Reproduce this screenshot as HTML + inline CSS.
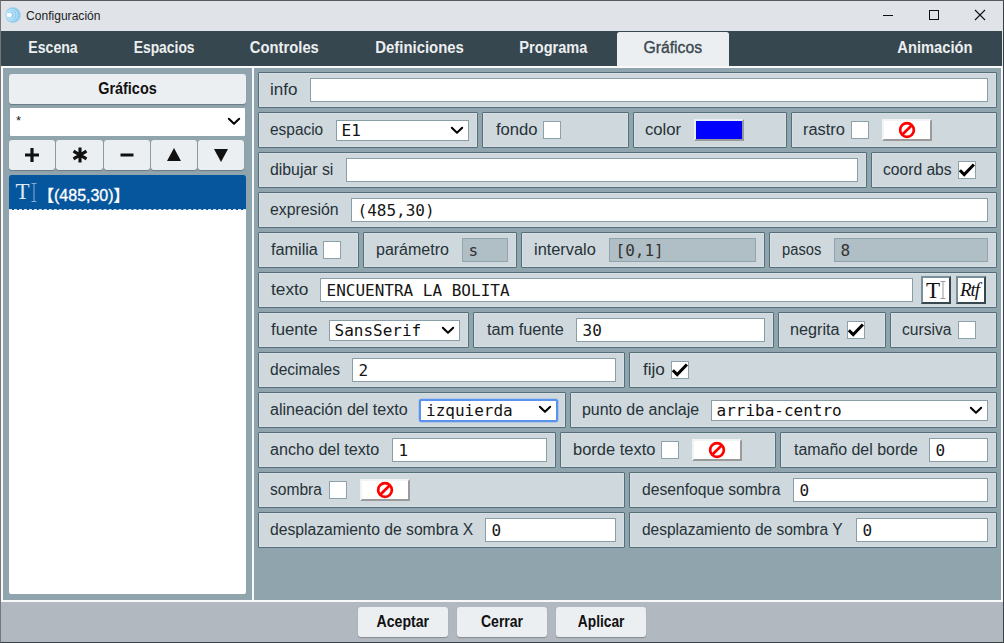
<!DOCTYPE html>
<html lang="es"><head><meta charset="utf-8"><title>Configuración</title>
<style>
html,body{margin:0;padding:0;}
body{width:1004px;height:643px;overflow:hidden;position:relative;background:#e0e3e8;font-family:"Liberation Sans",sans-serif;}
div,span{box-sizing:border-box;}
.abs,.cell,.lb,.in,.sel,.cb,.ban,.tab,.btn{position:absolute;}
#win{position:absolute;left:0;top:0;width:1004px;height:643px;border:1px solid #3b4246;border-left-color:#777;border-top-color:#5a5a5a;}
#title{position:absolute;left:1px;top:1px;width:1002px;height:30px;background:#e0e3e8;}
#title .t{transform-origin:0 50%;position:absolute;left:25px;top:7px;font-size:12px;line-height:16px;color:#1c1c1c;white-space:nowrap;}
#tabs{position:absolute;left:1px;top:31px;width:1001px;height:35px;background:#37474f;}
.tab span,.btn span{display:inline-block;}
.tab{top:0;height:35px;line-height:34px;font-size:16px;font-weight:bold;color:#eceff1;text-align:center;white-space:nowrap;}
.tab.act{top:1px;height:34px;line-height:32px;background:#eceff1;color:#37474f;border-radius:2.5px 2.5px 0 0;font-weight:normal;-webkit-text-stroke:0.35px #37474f;}
#content{position:absolute;left:1px;top:66px;width:1002px;height:536px;background:#f8f9fb;}
#left{position:absolute;left:2px;top:2px;width:249px;height:532px;background:#90a4ae;}
#right{position:absolute;left:253px;top:2px;width:747px;height:532px;background:#90a4ae;}
#bottom{position:absolute;left:1px;top:602px;width:1002px;height:40px;background:#b1b8bf;}
.btn{background:#eceff1;border-radius:3px;box-shadow:0 1px 1px rgba(0,0,0,.25);font-size:16px;color:#111;text-align:center;white-space:nowrap;font-weight:bold;}
.cell{height:36px;background:#cfd8dc;border:1px solid #546e7a;border-radius:1px;box-shadow:inset 0 0 0 1px #d8dfe3;}
.lb{transform-origin:0 50%;font-size:16px;line-height:20px;color:#263238;white-space:nowrap;}
.in{height:24px;background:#fff;border:1px solid #8a9ea8;font-family:"DejaVu Sans Mono","Liberation Mono",monospace;font-size:16px;line-height:24px;color:#161616;padding-left:5.5px;white-space:pre;overflow:hidden;}
.in.dis{background:#b0bec5;border-color:#90a4ae;color:#333;}
.sel{height:21px;background:#fff;border:1px solid #8a9ea8;font-family:"DejaVu Sans Mono","Liberation Mono",monospace;font-size:16px;line-height:19px;color:#111;padding-left:4.5px;white-space:pre;overflow:hidden;}
.sel.foc{border:2px solid #5a92ec;line-height:17px;padding-left:5px;border-radius:2.5px;margin-top:-1px;height:23px;line-height:19px;box-shadow:0 0 0 0.5px #8fb4ee;}
.sel svg,.chev{position:absolute;}
.cb{width:18px;height:18px;background:#fff;border:1px solid #8da1ab;}
.cb svg{position:absolute;left:0;top:0;}
.ban{width:50px;height:22px;background:#fff;border:2px solid;border-color:#f1f4f5 #9a9a9a #9a9a9a #f1f4f5;}
.ban svg{position:absolute;left:14px;top:0px;}
</style></head><body>
<div id="win"></div>

<div id="title">
<svg class="abs" style="left:4.2px;top:5.5px" width="16" height="16" viewBox="0 0 16 16"><circle cx="8" cy="8" r="7.7" fill="#8fcdf0"/><circle cx="6.6" cy="8" r="5.6" fill="none" stroke="#c4e4f7" stroke-width="0.9"/><circle cx="5.6" cy="8" r="4" fill="none" stroke="#d4ecfa" stroke-width="0.9"/><circle cx="4.8" cy="8" r="2.6" fill="#cfe9f9"/><ellipse cx="4.2" cy="8" rx="2.3" ry="1.9" fill="#fff"/></svg>
<span class="t" style="transform:scaleX(1.0061);" id="ttl">Configuración</span>
<svg class="abs" style="left:881px;top:8px" width="12" height="12" viewBox="0 0 12 12"><path d="M1 6.5H11" stroke="#111" stroke-width="1" fill="none"/></svg>
<svg class="abs" style="left:927px;top:8px" width="12" height="12" viewBox="0 0 12 12"><rect x="1.5" y="1.5" width="9" height="9" stroke="#111" stroke-width="1" fill="none"/></svg>
<svg class="abs" style="left:973px;top:8px" width="12" height="12" viewBox="0 0 12 12"><path d="M1 1L11 11M11 1L1 11" stroke="#111" stroke-width="1.1" fill="none"/></svg>
</div>
<div id="tabs">
<div class="tab" style="left:-27.8px;width:160px;"><span id="t_0" style="transform:scaleX(0.8814);">Escena</span></div>
<div class="tab" style="left:83.2px;width:160px;"><span id="t_1" style="transform:scaleX(0.8667);">Espacios</span></div>
<div class="tab" style="left:203.4px;width:160px;"><span id="t_2" style="transform:scaleX(0.9240);">Controles</span></div>
<div class="tab" style="left:338.2px;width:160px;"><span id="t_3" style="transform:scaleX(0.9302);">Definiciones</span></div>
<div class="tab" style="left:472.4px;width:160px;"><span id="t_4" style="transform:scaleX(0.9103);">Programa</span></div>
<div class="tab act" style="left:616px;width:112px;"><span id="t_5" style="transform:scaleX(0.9836);">Gráficos</span></div>
<div class="tab" style="left:854.0px;width:160px;"><span id="t_6" style="transform:scaleX(0.9206);">Animación</span></div>
</div>
<div id="content"><div id="left">
<div class="btn" style="left:6px;top:6px;width:237px;height:30px;line-height:29px;"><span id="b_graf" style="transform:scaleX(0.9026);">Gráficos</span></div>
<div class="abs" style="left:7px;top:40px;width:235px;height:28px;background:#fff;border-radius:1px;font-size:13px;line-height:26px;padding-left:6px;color:#222;">*<svg class="chev" style="left:216px;top:9.4px" width="16" height="9" viewBox="0 0 16 9"><path d="M2.8 1.7L8 6.8L13.2 1.7" stroke="#000" stroke-width="2" stroke-linecap="round" stroke-linejoin="round" fill="none"/></svg></div>
<div class="btn" style="left:6px;top:72px;width:46px;height:30px;"><svg class="abs" style="left:12.0px;top:4px" width="22" height="22" viewBox="0 0 22 22"><path d="M4 11H18M11 4V18" stroke="#111" stroke-width="3.2" fill="none"/></svg></div>
<div class="btn" style="left:53px;top:72px;width:47px;height:30px;"><svg class="abs" style="left:12.5px;top:4px" width="22" height="22" viewBox="0 0 22 22"><path d="M11 3.5V18.5M4.5 7.2L17.5 14.8M17.5 7.2L4.5 14.8" stroke="#111" stroke-width="3.1" fill="none"/></svg></div>
<div class="btn" style="left:101px;top:72px;width:46px;height:30px;"><svg class="abs" style="left:12.0px;top:4px" width="22" height="22" viewBox="0 0 22 22"><path d="M4.5 11H17.5" stroke="#111" stroke-width="3" fill="none"/></svg></div>
<div class="btn" style="left:148px;top:72px;width:46px;height:30px;"><svg class="abs" style="left:12.0px;top:4px" width="22" height="22" viewBox="0 0 22 22"><path d="M11 4L18 17H4Z" fill="#111"/></svg></div>
<div class="btn" style="left:195px;top:72px;width:46px;height:30px;"><svg class="abs" style="left:12.0px;top:4px" width="22" height="22" viewBox="0 0 22 22"><path d="M11 18L18 5H4Z" fill="#111"/></svg></div>
<div class="abs" style="left:6px;top:107px;width:237px;height:419px;background:#fff;border-radius:2px;overflow:hidden;">
<div class="abs" style="left:0;top:0;width:237px;height:35px;background:#06569d;border-bottom:1px dashed #d9e6f2;"></div>
<span class="abs" style="left:6.5px;top:3.5px;font-family:'Liberation Serif',serif;font-size:23px;line-height:26px;color:#dfe9f3;">T</span>
<svg class="abs" style="left:21.5px;top:7.5px" width="6" height="19" viewBox="0 0 6 19"><path d="M0.5 0.5H5.5M3 0.5V18.5M0.5 18.5H5.5" stroke="#86abd2" stroke-width="1" fill="none"/></svg>
<span class="abs" id="l_item" style="left:29px;top:11px;font-family:'Liberation Sans','Noto Sans CJK SC',sans-serif;font-size:16px;line-height:20px;color:#fff;-webkit-text-stroke:0.3px #fff;white-space:nowrap;">【(485,30)】</span>
</div>
</div><div id="right">
<div class="cell" style="left:4px;top:4px;width:739px;"></div>
<div class="cell" style="left:4px;top:44px;width:220px;"></div>
<div class="cell" style="left:228px;top:44px;width:147px;"></div>
<div class="cell" style="left:379px;top:44px;width:154px;"></div>
<div class="cell" style="left:537px;top:44px;width:206px;"></div>
<div class="cell" style="left:4px;top:84px;width:609px;"></div>
<div class="cell" style="left:617px;top:84px;width:126px;"></div>
<div class="cell" style="left:4px;top:124px;width:739px;"></div>
<div class="cell" style="left:4px;top:164px;width:101px;"></div>
<div class="cell" style="left:109px;top:164px;width:154px;"></div>
<div class="cell" style="left:267px;top:164px;width:244px;"></div>
<div class="cell" style="left:515px;top:164px;width:228px;"></div>
<div class="cell" style="left:4px;top:204px;width:739px;"></div>
<div class="cell" style="left:4px;top:244px;width:211px;"></div>
<div class="cell" style="left:219px;top:244px;width:301px;"></div>
<div class="cell" style="left:524px;top:244px;width:108px;"></div>
<div class="cell" style="left:636px;top:244px;width:107px;"></div>
<div class="cell" style="left:4px;top:284px;width:367px;"></div>
<div class="cell" style="left:375px;top:284px;width:368px;"></div>
<div class="cell" style="left:4px;top:324px;width:308px;"></div>
<div class="cell" style="left:316px;top:324px;width:427px;"></div>
<div class="cell" style="left:4px;top:364px;width:298px;"></div>
<div class="cell" style="left:306px;top:364px;width:216px;"></div>
<div class="cell" style="left:526px;top:364px;width:217px;"></div>
<div class="cell" style="left:4px;top:404px;width:367px;"></div>
<div class="cell" style="left:375px;top:404px;width:368px;"></div>
<div class="cell" style="left:4px;top:444px;width:367px;"></div>
<div class="cell" style="left:375px;top:444px;width:368px;"></div>
<span class="lb" id="lb_0" style="left:16.1px;top:12px;transform:scaleX(1.0621);">info</span>
<span class="lb" id="lb_1" style="left:16.1px;top:52px;transform:scaleX(0.9645);">espacio</span>
<span class="lb" id="lb_2" style="left:241.7px;top:52px;transform:scaleX(1.0388);">fondo</span>
<span class="lb" id="lb_3" style="left:391.4px;top:52px;transform:scaleX(1.0407);">color</span>
<span class="lb" id="lb_4" style="left:549.1px;top:52px;transform:scaleX(1.0243);">rastro</span>
<span class="lb" id="lb_5" style="left:16.1px;top:92px;transform:scaleX(0.9886);">dibujar si</span>
<span class="lb" id="lb_6" style="left:629.4px;top:92px;transform:scaleX(0.9763);">coord abs</span>
<span class="lb" id="lb_7" style="left:16.1px;top:132px;transform:scaleX(0.9874);">expresión</span>
<span class="lb" id="lb_8" style="left:16.7px;top:172px;transform:scaleX(1.0144);">familia</span>
<span class="lb" id="lb_9" style="left:122.1px;top:172px;transform:scaleX(0.9997);">parámetro</span>
<span class="lb" id="lb_10" style="left:279.7px;top:172px;transform:scaleX(1.0218);">intervalo</span>
<span class="lb" id="lb_11" style="left:527.7px;top:172px;transform:scaleX(0.9203);">pasos</span>
<span class="lb" id="lb_12" style="left:16.7px;top:212px;transform:scaleX(1.0782);">texto</span>
<span class="lb" id="lb_13" style="left:16.7px;top:252px;transform:scaleX(1.0453);">fuente</span>
<span class="lb" id="lb_14" style="left:232.7px;top:252px;transform:scaleX(1.0171);">tam fuente</span>
<span class="lb" id="lb_15" style="left:536.4px;top:252px;transform:scaleX(1.0139);">negrita</span>
<span class="lb" id="lb_16" style="left:648.1px;top:252px;transform:scaleX(0.9746);">cursiva</span>
<span class="lb" id="lb_17" style="left:16.1px;top:292px;transform:scaleX(0.9704);">decimales</span>
<span class="lb" id="lb_18" style="left:388.7px;top:292px;transform:scaleX(1.0707);">fijo</span>
<span class="lb" id="lb_19" style="left:16.1px;top:332px;transform:scaleX(1.0052);">alineación del texto</span>
<span class="lb" id="lb_20" style="left:328.1px;top:332px;transform:scaleX(0.9971);">punto de anclaje</span>
<span class="lb" id="lb_21" style="left:16.1px;top:372px;transform:scaleX(1.0071);">ancho del texto</span>
<span class="lb" id="lb_22" style="left:318.6px;top:372px;transform:scaleX(1.0292);">borde texto</span>
<span class="lb" id="lb_23" style="left:539.7px;top:372px;transform:scaleX(0.9949);">tamaño del borde</span>
<span class="lb" id="lb_24" style="left:16.1px;top:412px;transform:scaleX(0.9727);">sombra</span>
<span class="lb" id="lb_25" style="left:388.1px;top:412px;transform:scaleX(0.9792);">desenfoque sombra</span>
<span class="lb" id="lb_26" style="left:16.1px;top:452px;transform:scaleX(0.9805);">desplazamiento de sombra X</span>
<span class="lb" id="lb_27" style="left:388.1px;top:452px;transform:scaleX(0.9689);">desplazamiento de sombra Y</span>
<div class="in" style="left:56px;top:10px;width:678px;"></div>
<div class="in" style="left:92px;top:90px;width:512px;"></div>
<div class="in" style="left:97px;top:130px;width:637px;">(485,30)</div>
<div class="in dis" style="left:208px;top:170px;width:46px;">s</div>
<div class="in dis" style="left:355px;top:170px;width:147px;">[0,1]</div>
<div class="in dis" style="left:580px;top:170px;width:154px;">8</div>
<div class="in" style="left:66px;top:210px;width:593px;">ENCUENTRA LA BOLITA</div>
<div class="in" style="left:322px;top:250px;width:189px;">30</div>
<div class="in" style="left:98px;top:290px;width:264px;">2</div>
<div class="in" style="left:138px;top:370px;width:155px;">1</div>
<div class="in" style="left:675px;top:370px;width:59px;">0</div>
<div class="in" style="left:539px;top:410px;width:195px;">0</div>
<div class="in" style="left:231px;top:450px;width:131px;">0</div>
<div class="in" style="left:602px;top:450px;width:132px;">0</div>
<div class="sel" style="left:82px;top:52px;width:133px;">E1<svg class="chev" style="right:3px;top:5px" width="16" height="9" viewBox="0 0 16 9"><path d="M2.8 1.7L8 6.8L13.2 1.7" stroke="#000" stroke-width="2" stroke-linecap="round" stroke-linejoin="round" fill="none"/></svg></div>
<div class="sel" style="left:75px;top:252px;width:131px;">SansSerif<svg class="chev" style="right:3px;top:5px" width="16" height="9" viewBox="0 0 16 9"><path d="M2.8 1.7L8 6.8L13.2 1.7" stroke="#000" stroke-width="2" stroke-linecap="round" stroke-linejoin="round" fill="none"/></svg></div>
<div class="sel foc" style="left:165px;top:332px;width:139px;">izquierda<svg class="chev" style="right:3px;top:4px" width="16" height="9" viewBox="0 0 16 9"><path d="M2.8 1.7L8 6.8L13.2 1.7" stroke="#000" stroke-width="2" stroke-linecap="round" stroke-linejoin="round" fill="none"/></svg></div>
<div class="sel" style="left:457px;top:332px;width:277px;">arriba-centro<svg class="chev" style="right:3px;top:5px" width="16" height="9" viewBox="0 0 16 9"><path d="M2.8 1.7L8 6.8L13.2 1.7" stroke="#000" stroke-width="2" stroke-linecap="round" stroke-linejoin="round" fill="none"/></svg></div>
<div class="cb" style="left:289px;top:53px;"></div>
<div class="cb" style="left:597px;top:53px;"></div>
<div class="cb" style="left:704px;top:93px;"><svg width="16" height="16" viewBox="0 0 16 16"><path d="M0.9 8.2L5.2 12.5L14.9 2.5" stroke="#000" stroke-width="3" fill="none"/></svg></div>
<div class="cb" style="left:69px;top:173px;"></div>
<div class="cb" style="left:593px;top:253px;"><svg width="16" height="16" viewBox="0 0 16 16"><path d="M0.9 8.2L5.2 12.5L14.9 2.5" stroke="#000" stroke-width="3" fill="none"/></svg></div>
<div class="cb" style="left:704px;top:253px;"></div>
<div class="cb" style="left:417px;top:293px;"><svg width="16" height="16" viewBox="0 0 16 16"><path d="M0.9 8.2L5.2 12.5L14.9 2.5" stroke="#000" stroke-width="3" fill="none"/></svg></div>
<div class="cb" style="left:407px;top:373px;"></div>
<div class="cb" style="left:75px;top:413px;"></div>
<div class="ban" style="left:628px;top:51px;"><svg width="18" height="18" viewBox="0 0 18 18"><circle cx="9" cy="9" r="6.85" stroke="#ff0000" stroke-width="2.7" fill="none"/><path d="M13.8 4.2L4.2 13.8" stroke="#ff0000" stroke-width="2.7"/></svg></div>
<div class="ban" style="left:438px;top:371px;"><svg width="18" height="18" viewBox="0 0 18 18"><circle cx="9" cy="9" r="6.85" stroke="#ff0000" stroke-width="2.7" fill="none"/><path d="M13.8 4.2L4.2 13.8" stroke="#ff0000" stroke-width="2.7"/></svg></div>
<div class="ban" style="left:106px;top:411px;"><svg width="18" height="18" viewBox="0 0 18 18"><circle cx="9" cy="9" r="6.85" stroke="#ff0000" stroke-width="2.7" fill="none"/><path d="M13.8 4.2L4.2 13.8" stroke="#ff0000" stroke-width="2.7"/></svg></div>
<div class="ban" style="left:440px;top:51px;background:#0000ff;border-color:#e8edf2 #9a9a9a #9a9a9a #e8edf2;width:50px;"></div>
<div class="abs" style="left:667px;top:208px;width:30px;height:28px;background:#fff;border:2px solid;border-color:#78909c #37474f #37474f #78909c;"><span class="abs" style="left:3px;top:0.7px;font-family:'Liberation Serif',serif;font-size:23px;line-height:24px;color:#111;">T</span><svg class="abs" style="left:17px;top:3px" width="6" height="18" viewBox="0 0 6 18"><path d="M0.5 0.5H5.5M3 0.5V17.5M0.5 17.5H5.5" stroke="#999" stroke-width="1" fill="none"/></svg></div>
<div class="abs" style="left:702px;top:208px;width:30px;height:28px;background:#fff;border:2px solid;border-color:#78909c #37474f #37474f #78909c;"><span class="abs" id="l_rtf" style="left:2px;top:0.5px;font-family:'Liberation Serif',serif;font-style:italic;font-size:19px;line-height:22px;color:#111;letter-spacing:-1.1px;">Rtf</span></div>
</div></div>
<div id="bottom">
<div class="btn" style="left:357px;top:5px;width:90px;height:30px;line-height:29px;"><span id="bb_0" style="transform:scaleX(0.8829);">Aceptar</span></div>
<div class="btn" style="left:456px;top:5px;width:90px;height:30px;line-height:29px;"><span id="bb_1" style="transform:scaleX(0.8765);">Cerrar</span></div>
<div class="btn" style="left:555px;top:5px;width:90px;height:30px;line-height:29px;"><span id="bb_2" style="transform:scaleX(0.8590);">Aplicar</span></div>
</div>
</body></html>
